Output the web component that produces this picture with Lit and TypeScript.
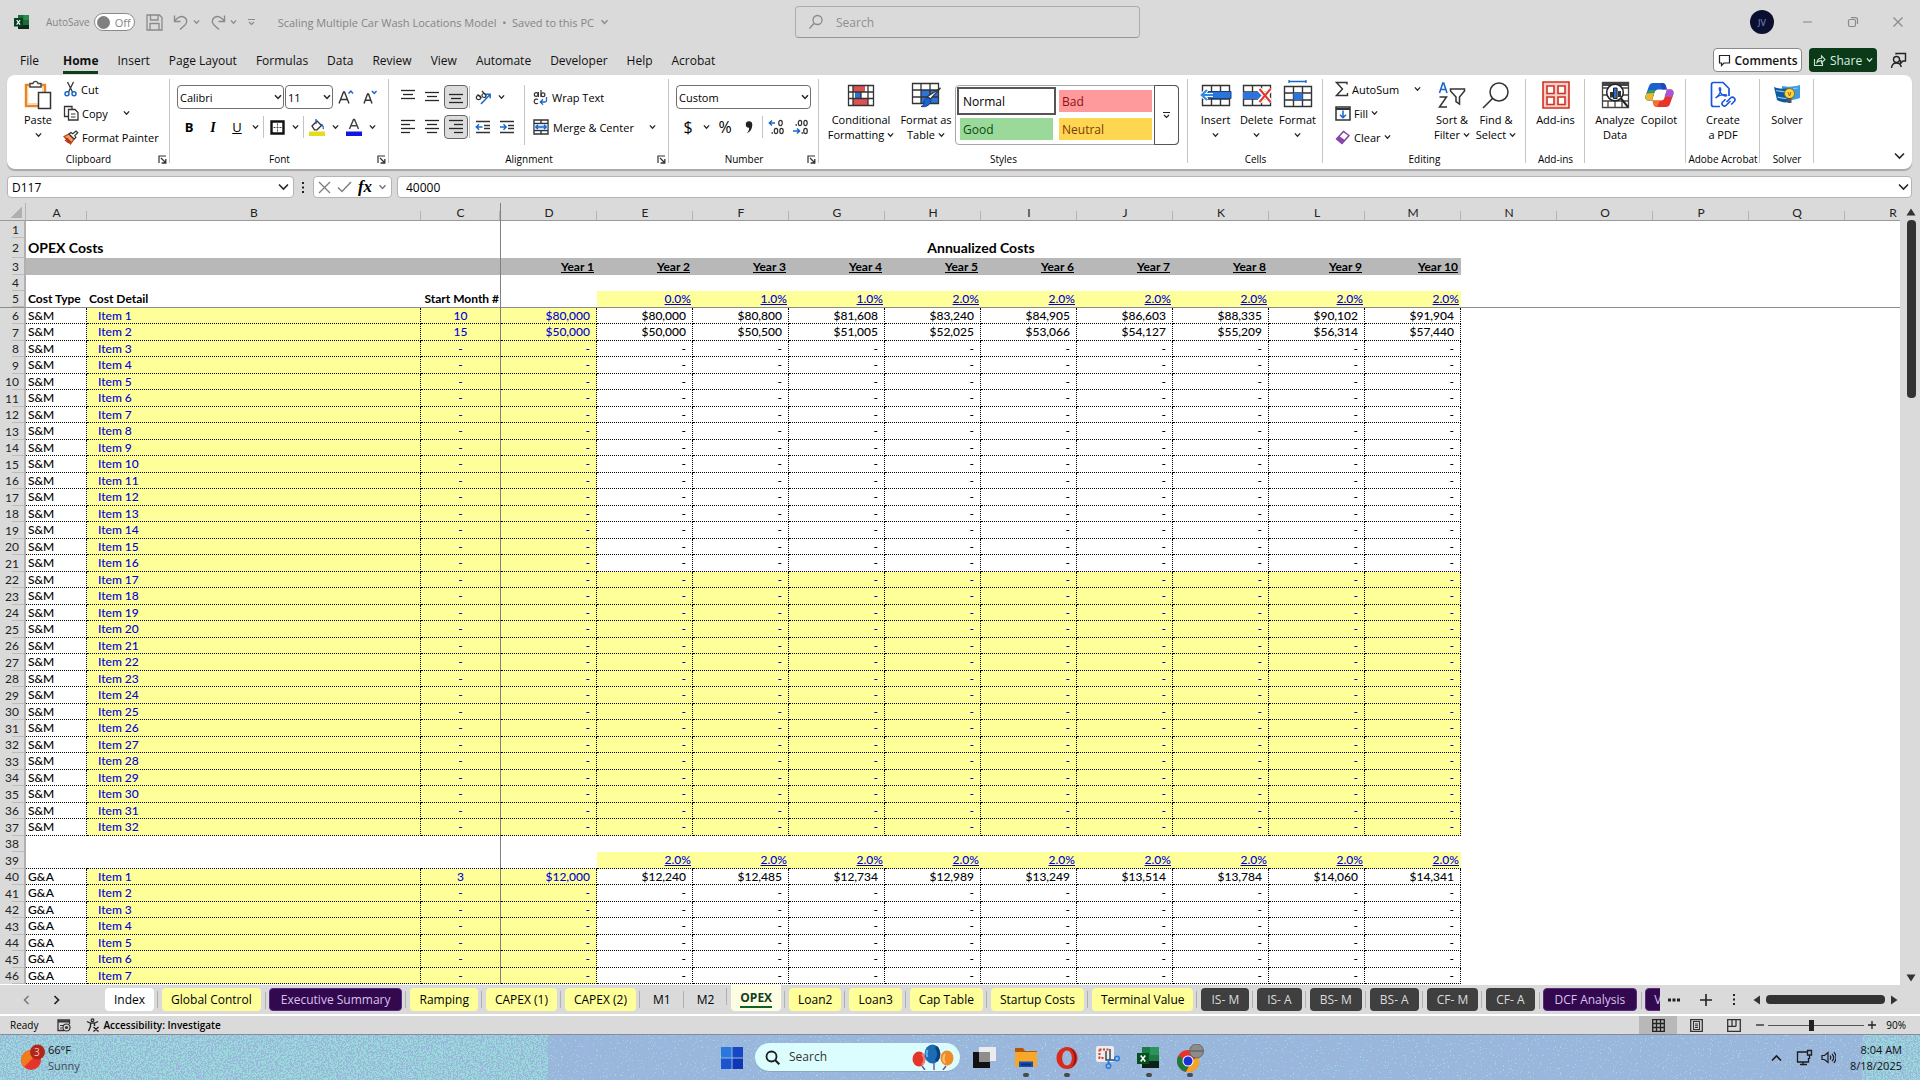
import { LitElement, html, svg, css, nothing } from "lit";
import { customElement, property } from "lit/decorators.js";
import { classMap } from "lit/directives/class-map.js";

/* ---------- icons ---------- */

const icon = (w: number, h: number, body: unknown, box = `0 0 ${w} ${h}`) =>
  html`<svg class="ic" width=${w} height=${h} viewBox=${box} fill="none" aria-hidden="true">${body}</svg>`;

const INK = "#262626";
const BLUE = "#1a66c8";

const chev = (w = 8, color = INK) =>
  icon(w, 6, svg`<path d="M1 1.2 4 4.4 7 1.2" stroke=${color} stroke-width="1.5"/>`, "0 0 8 6");
const chevWide = (color = INK) =>
  icon(11, 8, svg`<path d="M1 1.5 5.5 6 10 1.5" stroke=${color} stroke-width="1.6"/>`);

const bars = (rows: number[][]) =>
  icon(16, 16, svg`${rows.map(([x, y, w]) => svg`<path d="M${x} ${y}.5h${w}" stroke=${INK} stroke-width="1.3"/>`)}`);

const tableGrid = svg`<path d="M1.5 2.5h27v20h-27zM1.5 9h27M1.5 16h27M10.5 2.5v20M19.5 2.5v20" stroke="#333" stroke-width="1.4" fill="#fff"/>`;

const icons = {
  excel: icon(16, 16, svg`<path d="M4 1h11v14H4z" fill="#1d6b3c"/><path d="M9.5 1H15v5H9.5z" fill="#2c8a50"/><path d="M4 11h11v4H4z" fill="#0c2a18"/><path d="M0 4h9v8.5H0z" fill="#06401f"/><path d="m2.7 6 3.4 4.600M6.100 6 2.700 10.600" stroke="#fff" stroke-width="1.2"/>`),
  save: icon(17, 17, svg`<path d="M1 1h12.500L16 3.500V16H1zM4.500 1v5h7.500V1M4 16v-6.500h9V16" stroke="#8a8a8a" stroke-width="1.3"/>`),
  undo: icon(16, 16, svg`<path d="M1.500 1.500v6h6M1.800 7C4 3.500 8 1.300 11.400 3.300c3 1.900 3 5.400.6 7.700L7 15.500" stroke="#8a8a8a" stroke-width="1.4"/>`),
  redo: icon(16, 16, svg`<path d="M14.500 1.500v6h-6M14.200 7C12 3.500 8 1.300 4.600 3.300c-3 1.900-3 5.400-.6 7.700L9 15.500" stroke="#8a8a8a" stroke-width="1.4"/>`),
  custom: icon(9, 8, svg`<path d="M1 1.500h7M2 4l2.500 2.500L7 4" stroke="#8a8a8a" stroke-width="1.2"/>`),
  search: icon(16, 16, svg`<circle cx="9.5" cy="6" r="4.5" stroke="#8a8a8a" stroke-width="1.3"/><path d="M6.200 9.300 1.500 14.500" stroke="#8a8a8a" stroke-width="1.3"/>`),
  minimize: icon(12, 12, svg`<path d="M1 6h9" stroke="#999" stroke-width="1.3"/>`),
  restore: icon(12, 12, svg`<rect x="1.5" y="3.5" width="7" height="7" rx="1.5" stroke="#8a8a8a" stroke-width="1.2"/><path d="M4 1.700h4.500a2 2 0 0 1 2 2V8" stroke="#8a8a8a" stroke-width="1.2"/>`),
  close: icon(12, 12, svg`<path d="m1.500 1.500 9 9m0-9-9 9" stroke="#8a8a8a" stroke-width="1.2"/>`),
  comment: icon(13, 13, svg`<path d="M1.500 1.500h10v7.500H6L3.500 11.500V9h-2z" stroke="#222" stroke-width="1.2"/>`),
  share: icon(13, 13, svg`<path d="M1.500 5v6.500h8V9M4 8.500C4.200 5.800 6 4.300 8.500 4.200V1.800l3.500 3.600-3.500 3.500V6.600C6.800 6.600 5.200 7 4 8.500z" stroke="#cfe6d6" stroke-width="1.1"/>`),
  person: icon(17, 17, svg`<circle cx="6.5" cy="7.5" r="3" stroke="#222" stroke-width="1.4"/><path d="M1.500 16c.3-3 2.300-5 5-5s4.200 1.600 4.800 4M6 2.500V1.500h9.500V9H13l-2.500 2.500V8" stroke="#222" stroke-width="1.4"/>`),
  paste: icon(28, 30, svg`<path d="M2 5h19v21H2z" stroke="#e8832a" stroke-width="2.4" fill="#fff"/><path d="M3.800 6.800h15v17h-15z" stroke="#f6c98d"/><path d="M6 7V3.500h3C9.500.7 13.500.7 14 3.500h3V7z" fill="#fff" stroke="#444" stroke-width="1.4"/><path d="M14.500 12.500h12v16h-12z" fill="#fff" stroke="#333" stroke-width="1.5"/>`),
  cut: icon(15, 16, svg`<path d="M4.500 1 9.500 11M10.500 1 5.500 11" stroke="#333" stroke-width="1.3"/><circle cx="4" cy="12.8" r="2" stroke=${BLUE} stroke-width="1.5"/><circle cx="11" cy="12.8" r="2" stroke=${BLUE} stroke-width="1.5"/>`),
  copy: icon(16, 16, svg`<path d="M9 4V1.500H1.500v10H5" stroke="#333" stroke-width="1.3"/><path d="M5.500 4.500H12l3 3v7.500H5.500z" stroke="#333" stroke-width="1.3"/><path d="M8 9h4.500M8 12h4.500" stroke="#333"/>`),
  painter: icon(16, 15, svg`<path d="M1 6.500 6 4l5 5-3.500 5z" fill="#f0a05a" stroke="#c2410c" stroke-width="1.3"/><path d="M3.500 8 8 12.500M2 10l4 3" stroke="#b3261e" stroke-width="1.4"/><path d="m6 4 2-1.500 1.800 1.200L13 1l1.800 1.800-3 2.800 1 2L11 9z" fill="#fff" stroke="#333" stroke-width="1.2"/>`),
  launcher: icon(9, 9, svg`<path d="M1 8V1h7" stroke="#333" stroke-width="1.2"/><path d="m3 3 4.500 4.500M7.800 4v4H3.600" stroke="#333" stroke-width="1.3"/>`),
  fontUp: icon(16, 16, svg`<path d="M1 14.500 5.500 3h1L11 14.500M2.700 10.500h6.600" stroke="#333" stroke-width="1.4"/><path d="m10.500 4.500 2.300-2.500L15 4.500" stroke=${BLUE} stroke-width="1.5"/>`),
  fontDown: icon(16, 16, svg`<path d="M2 14.500 5.500 5h1L10 14.500M3.300 11.300h5.400" stroke="#333" stroke-width="1.4"/><path d="m10 2 2.300 2.500L14.500 2" stroke=${BLUE} stroke-width="1.5"/>`),
  border: icon(15, 15, svg`<path d="M1.500 1.500h12v12h-12z" stroke="#111" stroke-width="2.4"/><path d="M7.500 3.500v8M3.500 7.500h8" stroke="#444" stroke-dasharray="2 1"/>`),
  fill: icon(16, 18, svg`<path d="m3 8 5-5 4.500 4.500-4.500 4.300H5.500z" stroke="#333" stroke-width="1.3"/><path d="M7 1v5M12.500 6c1.500 1.500 2 3 1.800 5" stroke=${BLUE} stroke-width="1.4"/><path d="M0 13.500h16V18H0z" fill="#e6dc1e"/>`),
  fontColor: icon(16, 18, svg`<path d="M3.500 11 7.500 1.500h1L12.500 11M5 7.800h6" stroke="#444" stroke-width="1.5"/><path d="M0 13.500h16V18H0z" fill="#1414e6"/>`),
  orient: icon(17, 16, svg`<circle cx="3.5" cy="8.5" r="2.2" stroke="#333" stroke-width="1.2"/><path d="M2.500 5.500 6.500 9M7 2l4 4.500" stroke="#333" stroke-width="1.2"/><circle cx="9" cy="6.5" r="2" stroke="#333" stroke-width="1.2"/><path d="M6 15 15 5.500M11 5.300h4.200v4" stroke=${BLUE} stroke-width="1.5"/>`),
  outdent: icon(16, 16, svg`<path d="M1 2.500h14M9 6.500h6M9 9.500h6M1 13.500h14" stroke="#333" stroke-width="1.3"/><path d="M7.500 8H1.500M4 5.300 1.300 8 4 10.700" stroke=${BLUE} stroke-width="1.4"/>`),
  indent: icon(16, 16, svg`<path d="M1 2.500h14M9 6.500h6M9 9.500h6M1 13.500h14" stroke="#333" stroke-width="1.3"/><path d="M1 8h6M4.500 5.300 7.200 8 4.500 10.700" stroke=${BLUE} stroke-width="1.4"/>`),
  wrap: icon(15, 16, svg`<circle cx="3.2" cy="5.5" r="1.9" stroke="#333" stroke-width="1.2"/><path d="M5.400 3v5M8 1v7M5 10.500c-2-1-3.800 0-3.800 1.900s1.800 2.900 3.800 1.900" stroke="#333" stroke-width="1.2"/><circle cx="10" cy="5.8" r="1.9" stroke="#333" stroke-width="1.2"/><path d="M13.500 8v3.500c0 1-.5 1.500-1.500 1.500H7.500m2.500-2.700L7.300 13l2.700 2.600" stroke=${BLUE} stroke-width="1.3"/>`),
  merge: icon(16, 16, svg`<path d="M1 1h14v14H1zM1 4.500h14M1 11.500h14M8 1v3.500M8 11.500V15" stroke="#333" stroke-width="1.4"/><path d="M1.700 5h12.600v6H1.700z" fill="#cfe0f7"/><path d="M3 8h10M5 5.800 2.800 8 5 10.200M11 5.800 13.200 8 11 10.200" stroke=${BLUE} stroke-width="1.4"/>`),
  comma: icon(8, 13, svg`<circle cx="4" cy="3.5" r="3.2" fill="#222"/><path d="M7.200 3.500C7.400 8 5 11 1.500 12.500 3.500 10.500 4.500 8.500 4 6z" fill="#222"/>`),
  incDec: icon(17, 16, svg`<path d="M7 4H1.500M4 1.500 1.300 4 4 6.500" stroke=${BLUE} stroke-width="1.4"/><ellipse cx="12.5" cy="4" rx="1.8" ry="2.7" stroke="#333" stroke-width="1.2"/><ellipse cx="8" cy="12" rx="1.7" ry="2.7" stroke="#333" stroke-width="1.2"/><ellipse cx="13.5" cy="12" rx="1.7" ry="2.7" stroke="#333" stroke-width="1.2"/><path d="M3.500 14h1.500" stroke="#333" stroke-width="1.5"/>`),
  decDec: icon(17, 16, svg`<ellipse cx="8" cy="4" rx="1.7" ry="2.7" stroke="#333" stroke-width="1.2"/><ellipse cx="13.5" cy="4" rx="1.7" ry="2.7" stroke="#333" stroke-width="1.2"/><path d="M3.500 6h1.500" stroke="#333" stroke-width="1.5"/><path d="M1 12h6.500M5 9.500 7.700 12 5 14.500" stroke=${BLUE} stroke-width="1.4"/><ellipse cx="13.5" cy="12" rx="1.8" ry="2.7" stroke="#333" stroke-width="1.2"/><path d="M9.500 14H11" stroke="#333" stroke-width="1.5"/>`),
  condFormat: icon(30, 26, svg`<path d="M2.500 3.500h25v20h-25z" fill="#fff"/><path d="M7 3.500h12v6.500H7zM7 16.500h15v7H7z" fill="#e05252"/><path d="M9 10h6v6.500H9z" fill="#2b6fd0"/><path d="M2.500 3.500h25v20h-25zM2.500 10h25M2.500 16.500h25M7 3.500v20M22 3.500v20M15 10v6.500" stroke="#333" stroke-width="1.3"/>`),
  fmtTable: icon(31, 28, svg`<path d="M10 9h18v13H10z" fill="#2b74de"/><path d="M1.500 2.500h26v20h-26zM1.500 9h26M1.500 16h26M10 2.500v20M19 2.500v20" stroke="#333" stroke-width="1.3"/><path d="m29.500 7-10 11-3-2.500z" fill="#fff" stroke="#333" stroke-width="1.2"/><path d="M17 17c2.500.5 3.500 2.500 2.500 4.500-1.500 3-5 5-9.500 4 2.500-1 3-2.500 3-4.500s2-4.300 4-4z" fill="#1c63cc" stroke="#123f86"/>`),
  insert: icon(32, 26, svg`<g transform="translate(1 1)">${tableGrid}</g><path d="M8 9.500h23v7H8z" fill="#2b74de" stroke="#1b3f78"/><path d="M13 13H2m5-5-5.300 5L7 18" stroke="#fff" stroke-width="4"/><path d="M13 13H2m5-5-5.300 5L7 18" stroke="#2b8be0" stroke-width="2"/>`),
  del: icon(32, 26, svg`<g transform="translate(1 1)">${tableGrid}</g><path d="M2 10h16l3 3.500-3 3.500H2z" fill="#2b74de"/><path d="m18 7 12 13m0-13L18 20" stroke="#fff" stroke-width="5"/><path d="m18.500 7 11 13m0-13-11 13" stroke="#e5352b" stroke-width="2"/>`),
  format: icon(32, 30, svg`<path d="M7 1.500h17M7 0v3M24 0v3" stroke=${BLUE} stroke-width="1.3"/><g transform="translate(1 4)">${tableGrid}<path d="M10.500 9h9v7h-9z" fill="#2b74de"/></g>`),
  sum: icon(14, 16, svg`<path d="M12 3.500V1.500H1.500L7.500 8l-6 6.500H12.500V12" stroke="#333" stroke-width="1.4"/>`),
  fillDown: icon(16, 15, svg`<path d="M1 1h14v13H1z" stroke="#333" stroke-width="1.5"/><path d="M1 3h14" stroke="#333" stroke-width="2"/><path d="M8 4.500v7M5 8.800l3 3 3-3" stroke=${BLUE} stroke-width="1.5"/>`),
  eraser: icon(16, 15, svg`<path d="m1.500 9 7-7.500 5.500 4-7 8z" stroke="#7a3fa0" stroke-width="1.4" fill="#fff"/><path d="m1.500 9 2.700-3 5.600 4-2.800 3.500z" fill="#8e44ad"/>`),
  sort: icon(28, 28, svg`<path d="m1.500 12 3.300-10h.9L9 12M2.700 8.500h5.200" stroke=${BLUE} stroke-width="1.6"/><path d="M1.500 16h7l-7 10h7.500" stroke="#333" stroke-width="1.5"/><path d="M12.500 8h14v2l-5 6v7l-3.500-2.500V16l-5.500-6z" stroke="#333" stroke-width="1.5"/>`),
  find: icon(28, 28, svg`<circle cx="17" cy="11" r="9" stroke="#333" stroke-width="1.5"/><path d="M10.500 17.500 1 27" stroke="#333" stroke-width="1.6"/>`),
  addins: icon(28, 28, svg`<path d="M1 1h26v26H1z" fill="#f8d0cb" stroke="#d3301f" stroke-width="1.6"/><path d="M5 5h7v7.500H5zM16 5h7v7.500h-7zM5 16h7v7.500H5zM16 16h7v7.500h-7z" fill="#fff" stroke="#d3301f" stroke-width="1.6"/>`),
  analyze: icon(29, 28, svg`<path d="M1.500 1.500h26v25h-26zM1.500 7h26M1.500 14h26M1.500 20h26M7 20v6M14 20v6M21 20v6" stroke="#444" stroke-width="1.3"/><path d="M1 1h27v4H1z" fill="#444"/><circle cx="14" cy="11.5" r="8.3" fill="#fff" stroke="#222" stroke-width="1.5"/><path d="M9 11h3v5.500H9zM17 10h3v6h-3z" fill="#333"/><path d="M12.500 7h3.600v10.500h-3.600z" fill="#2b6fd0" stroke="#222"/><path d="m20 17.500 7 8.500" stroke="#222" stroke-width="2"/>`),
  copilot: icon(29, 28, svg`<path d="M8 2h9c2 0 3 1 3.600 3l1 3.500H13c-2 0-3 1-3.600 3L7 19.500H4c-3 0-4-2-3.300-5L4 5c.7-2 2-3 4-3z" fill="#1d5fd0"/><path d="M4 9h8.500c-1.700.4-2.600 1-3.100 2.500L7 19.500H4c-3 0-4-2-3.300-5z" fill="#2f9a63"/><path d="M1.500 12.500 9 12l-2 7.500H4c-2.600 0-3.900-2-3.300-5z" fill="#f0b429"/><path d="M21 26h-9c-2 0-3-1-3.600-3l-1-3.500H16c2 0 3-1 3.600-3L22 8.500h3c3 0 4 2 3.300 5L25 23c-.7 2-2 3-4 3z" fill="#e5352b"/><path d="M22 8.500h3c3 0 4 2 3.300 5l-.8 2.500-8-.5z" fill="#a855d8"/><path d="M15.500 2h2c2 0 3 1 3.500 3l1 3.500h-5z" fill="#2447b8"/><path d="M7.500 19.500H15l-3 6.500c-2 0-3-1-3.600-3z" fill="#f3722c"/>`),
  pdf: icon(26, 28, svg`<path d="M10 25.500H3.500c-1.300 0-2-.7-2-2v-20c0-1.300.7-2 2-2H13l6 6V15" stroke="#1656e0" stroke-width="1.7"/><path d="M5.500 17c4-2.500 6-7.500 5-10-1-1-1.600.3-1 2 1 3.500 3.700 6 6.500 6 1 0 1-1.300-.5-1.400-3-.3-7 .9-10 3.400z" stroke="#1656e0" stroke-width="1.3"/><path d="m16.500 21 4-4a2.500 2.500 0 0 1 3.700 3.500l-3 3M20.500 20l-4.300 4.300a2.300 2.300 0 0 1-3.500-3.300l2.800-2.800" stroke="#1656e0" stroke-width="1.6"/>`),
  solver: icon(28, 22, svg`<path d="M9 2c6 1 12 1 18-1v13c-6 2-12 3-18 2z" fill="#3d9be0"/><path d="M1 3c5 2 10 2 15 1v14c-5 1-9 0-12-2z" fill="#0f5a9e"/><path d="M3 6.500c4 1 7 1.500 10 1.200M4.500 13c3 1 6 1.500 9 1.500M20 5l5-1" stroke="#8cc7ee" stroke-width="1.2"/><circle cx="16.500" cy="9.500" r="5" fill="#ffd23f" stroke="#8a6a10"/><path d="M14.500 14h4v5h-4z" fill="#555"/><path d="m15 8 1.500 4L18 8" stroke="#8a6a10"/>`),
  cancel: icon(13, 13, svg`<path d="m1 1 11 11M12 1 1 12" stroke="#7c7c7c" stroke-width="1.3"/>`),
  check: icon(15, 12, svg`<path d="m1 6.500 4 4L14 1" stroke="#7c7c7c" stroke-width="1.4"/>`),
  vdots: icon(4, 13, svg`<path d="M1 1h2v2H1zM1 5.500h2v2H1zM1 10h2v2H1z" fill="#222"/>`),
  hdots: icon(12, 4, svg`<path d="M0 .5h3v3H0zM4.500.5h3v3h-3zM9 .5h3v3H9z" fill="#222"/>`),
  plus: icon(12, 12, svg`<path d="M6 0v12M0 6h12" stroke="#222" stroke-width="1.6"/>`),
  navL: icon(7, 10, svg`<path d="M5.500 1 1.500 5l4 4" stroke="#777" stroke-width="1.5"/>`),
  navR: icon(7, 10, svg`<path d="m1.500 1 4 4-4 4" stroke="#222" stroke-width="1.7"/>`),
  triUp: icon(10, 8, svg`<path d="M5 .5 9.500 7.500h-9z" fill="#333"/>`),
  triDown: icon(10, 8, svg`<path d="M5 7.500 9.500.5h-9z" fill="#333"/>`),
  triL: icon(8, 10, svg`<path d="M.5 5 7 .5v9z" fill="#333"/>`),
  triR: icon(8, 10, svg`<path d="M7.500 5 1 .5v9z" fill="#333"/>`),
  macro: icon(14, 13, svg`<path d="M7 11.500H1V1h11.500v4" stroke="#333" stroke-width="1.3"/><path d="M1 1.500h11.500v2H1z" fill="#333"/><path d="M3 6.500h3M3 9h2" stroke="#333"/><circle cx="9.5" cy="8.5" r="3.5" stroke="#333" stroke-width="1.2"/><circle cx="9.5" cy="8.5" r="1.6" fill="#333"/>`),
  access: icon(14, 14, svg`<circle cx="6.5" cy="2.3" r="1.4" stroke="#222" stroke-width="1.2"/><path d="M1 3.500c3 2.200 8 2.200 11 0M4.500 5.500v3L2.500 13M8.500 5.500v2.500M7.500 9l5 4.500m0-4.500-5 4.500" stroke="#222" stroke-width="1.4"/>`),
  viewNormal: icon(13, 13, svg`<path d="M.7.7h11.600v11.600H.7zM.7 4.500h11.600M.7 8.500h11.600M4.500.7v11.600M8.500.7v11.600" stroke="#222" stroke-width="1.3"/>`),
  viewPage: icon(13, 13, svg`<path d="M.7.7h11.600v11.600H.7z" stroke="#333" stroke-width="1.3"/><path d="M3.500 2.500h6v8h-6zM5 5h3M5 6.800h3M5 8.500h3" stroke="#333" stroke-width="1.1"/>`),
  viewBreak: icon(14, 13, svg`<path d="M.7.7h12.600v11.600H.7zM5 .7v6.500M9 .7v6.500M.7 7.300h8.500" stroke="#333" stroke-width="1.3"/>`),
  start: icon(22, 22, svg`<path d="M0 0h10.500v10.500H0z" fill="#2a78dc"/><path d="M11.500 0H22v10.500H11.500z" fill="#1648c4"/><path d="M0 11.500h10.500V22H0z" fill="#1b54cf"/><path d="M11.500 11.500H22V22H11.500z" fill="#0f36b4"/>`),
  glass: icon(15, 15, svg`<circle cx="6.5" cy="6.5" r="5" stroke="#1c1c1c" stroke-width="1.8"/><path d="m10.300 10.300 4 4" stroke="#1c1c1c" stroke-width="2"/>`),
  balloons: icon(42, 26, svg`<path d="M22 18v8M10 22l3 4M34 22l-3 4" stroke="#6b3fa0" stroke-width="1.3"/><ellipse cx="7" cy="15" rx="6.5" ry="7.5" fill="#e5352b"/><path d="M10 10c3 3 3 8 0 11" stroke="#f0806f" stroke-width="2"/><ellipse cx="35" cy="14" rx="6.5" ry="7.5" fill="#f08a24"/><path d="M33 10c-2 3-2 6 0 9" stroke="#ffc56b" stroke-width="2"/><ellipse cx="20.5" cy="10" rx="8" ry="9.5" fill="#1d6bb5"/><path d="M24 3c3 3 4 10 0 14" stroke="#0e3f78" stroke-width="3"/><path d="M15.500 6c-1 2-1 5 0 7" stroke="#69b2e8" stroke-width="2"/>`),
  taskview: icon(23, 21, svg`<path d="M6 0h17v14H6z" fill="#ececec"/><path d="M0 5h17v16H0z" fill="#111"/><path d="M6 5h11v10H6z" fill="#8e8e8e"/>`),
  folder: icon(24, 22, svg`<path d="M1 1h8l2 3h12v5H1z" fill="#b5560f"/><path d="M1 5h22v15H1z" fill="#f7a72a"/><path d="M5 14.500h14V20H5z" fill="#1450b8"/><path d="M7 17.500h10" stroke="#0b2f78" stroke-width="2"/>`),
  opera: icon(22, 22, svg`<path fill-rule="evenodd" d="M11 0C5 0 .5 5 .5 11S5 22 11 22s10.500-5 10.500-11S17 0 11 0zm0 3.500c2.800 0 4.800 3.500 4.800 7.500s-2 7.500-4.800 7.500S6.200 15 6.200 11 8.200 3.500 11 3.500z" fill="#d92a1c"/><path d="M14 1c8 3 9 16 0 20.500 6-5 6-15 0-20.500z" fill="#8e1512"/>`),
  snip: icon(24, 23, svg`<rect x="0" y="0" width="18" height="16" rx="2" fill="#ededed"/><path d="M3.500 3.500h9.500M3.500 3.500v8.500h5" stroke="#d0392b" stroke-width="2" stroke-dasharray="2 1.5"/><path d="M10 5v9h9M14 3v11" stroke="#444" stroke-width="1.500"/><path d="m12 13 1 5M16 14h4" stroke="#2b78d8" stroke-width="2"/><circle cx="12.500" cy="20" r="2.300" stroke="#2b78d8" stroke-width="1.500"/><circle cx="21" cy="12.500" r="2.300" stroke="#2b78d8" stroke-width="1.500"/>`),
  excelBig: icon(23, 22, svg`<path d="M5 0h17v21H5z" fill="#1d7a45"/><path d="M13 0h9v8h-9z" fill="#2c9459"/><path d="M5 14h17v7H5z" fill="#0b2415"/><path d="M0 6h12v11H0z" fill="#06501f"/><path d="m3.700 8.500 4.600 6M8.300 8.500l-4.600 6" stroke="#fff" stroke-width="1.5"/>`),
  chrome: icon(28, 28, svg`<circle cx="12" cy="17" r="11" fill="#e5352b"/><path d="M2.500 11.500a11 11 0 0 0 7 16.200L14 20z" fill="#1f7a3a"/><path d="M22 12a11 11 0 0 1-12 15.800L16 17z" fill="#f5a524"/><circle cx="12" cy="17" r="5.5" fill="#fff"/><circle cx="12" cy="17" r="4.5" fill="#1632d8"/><circle cx="20.5" cy="7" r="7" fill="#8c8c8c" stroke="#666"/><path d="M14 7h13" stroke="#555"/>`),
  weather: icon(26, 27, svg`<circle cx="11" cy="16" r="10" fill="#e5352b"/><path d="M11 6a10 10 0 0 0-7 17l9-9z" fill="#f07a1e"/><circle cx="17.5" cy="8" r="7.5" fill="#b3241a"/>`),
  trayUp: icon(11, 8, svg`<path d="M1 6.500 5.500 2 10 6.500" stroke="#1c1c1c" stroke-width="1.6"/>`),
  tray: icon(17, 17, svg`<path d="M11 3H1.500v10h11V9M7 13v2.500M4 15.500h7" stroke="#1c1c1c" stroke-width="1.3"/><path d="M11.500 1.500h4V6h-4zM13.500 6v4" stroke="#1c1c1c" stroke-width="1.3"/>`),
  speaker: icon(15, 13, svg`<path d="M1 4.500h2.500L7 1.500v10L3.500 8.500H1z" stroke="#1c1c1c" stroke-width="1.2"/><path d="M9 4.500c1 1.200 1 2.800 0 4M11 2.800c2 2.200 2 5.200 0 7.400M13 1c2.500 3.300 2.500 7.700 0 11" stroke="#1c1c1c" stroke-width="1.2"/>`),
};

/* ---------- data ---------- */

const YEARS = ["Year 1", "Year 2", "Year 3", "Year 4", "Year 5", "Year 6", "Year 7", "Year 8", "Year 9", "Year 10"];
const COLUMNS = "ABCDEFGHIJKLMNOPQR".split("");
const SM_GROWTH = ["0.0%", "1.0%", "1.0%", "2.0%", "2.0%", "2.0%", "2.0%", "2.0%", "2.0%"];
const GA_GROWTH = Array(9).fill("2.0%");

interface Cost {
  month: string;
  values: string[];
}
const EMPTY: Cost = { month: "-", values: Array(10).fill("-") };
const SM: Record<number, Cost> = {
  1: { month: "10", values: ["$80,000", "$80,000", "$80,800", "$81,608", "$83,240", "$84,905", "$86,603", "$88,335", "$90,102", "$91,904"] },
  2: { month: "15", values: ["$50,000", "$50,000", "$50,500", "$51,005", "$52,025", "$53,066", "$54,127", "$55,209", "$56,314", "$57,440"] },
};
const GA: Record<number, Cost> = {
  1: { month: "3", values: ["$12,000", "$12,240", "$12,485", "$12,734", "$12,989", "$13,249", "$13,514", "$13,784", "$14,060", "$14,341"] },
};
const range = (n: number) => Array.from({ length: n }, (_, i) => i + 1);

const TABS: [string, string][] = [
  ["Index", "white"], ["Global Control", "yellow"], ["Executive Summary", "purple"], ["Ramping", "yellow"],
  ["CAPEX (1)", "yellow"], ["CAPEX (2)", "yellow"], ["M1", "plain"], ["M2", "plain"], ["OPEX", "active"],
  ["Loan2", "yellow"], ["Loan3", "yellow"], ["Cap Table", "yellow"], ["Startup Costs", "yellow"],
  ["Terminal Value", "yellow"], ["IS- M", "dark"], ["IS- A", "dark"], ["BS- M", "dark"], ["BS- A", "dark"],
  ["CF- M", "dark"], ["CF- A", "dark"], ["DCF Analysis", "purple"], ["V", "purple"],
];

/* ---------- shared styles ---------- */

const base = css`
  * { box-sizing: border-box; }
  button, input, select {
    font: inherit;
    color: inherit;
    margin: 0;
    padding: 0;
    border: 0;
    background: none;
    border-radius: 0;
    appearance: none;
    outline: none;
  }
  button {
    display: inline-flex;
    align-items: center;
    justify-content: center;
    white-space: nowrap;
    flex: none;
  }
  a { color: inherit; text-decoration: none; }
  .ic { display: block; flex: none; }
`;

/* ---------- title bar and tabs ---------- */

@customElement("title-bar")
export class TitleBar extends LitElement {
  static styles = [base, css`
    :host { display: block; }
    .bar { display: grid; grid-template-columns: 53fr 345px 52fr; align-items: center; height: 44px; color: #858585; font-size: 11px; }
    .left { display: flex; align-items: center; padding-left: 14px; }
    .auto { margin: 0 4px 0 16px; font-size: 10px; }
    .toggle { display: flex; align-items: center; gap: 5px; width: 41px; height: 18px; border: 1px solid #8a8a8a; border-radius: 9px; background: #fff; padding-left: 2px; margin-right: 11px; justify-content: flex-start; }
    .knob { width: 13px; height: 13px; border-radius: 50%; background: #808080; }
    .tool { margin-right: 4px; }
    .tool.wide { margin-right: 10px; }
    .name { margin-left: 22px; gap: 6px; }
    .search { display: flex; align-items: center; gap: 12px; height: 32px; border: 1px solid #adadad; border-bottom-color: #969696; border-radius: 4px; padding-left: 12px; }
    .search input { flex: 1; min-width: 0; font-size: 12px; }
    .search input::placeholder { color: #8f8f8f; opacity: 1; }
    .right { display: flex; align-items: center; justify-content: flex-end; }
    .avatar { width: 24px; height: 24px; border-radius: 50%; background: #0b1030; color: #7d8fd0; font-size: 9px; margin-right: 11px; }
    .win { width: 45px; height: 24px; }
    .tabs { display: flex; align-items: flex-start; height: 31px; padding-left: 20px; font-size: 12px; color: #111; }
    .menu { display: flex; gap: 19px; flex: 1; padding-top: 8px; line-height: 18px; font-weight: 500; }
    .menu a:first-child { margin-right: 5px; }
    .menu a.on { font-weight: 700; border-bottom: 3px solid #0d3d1b; height: 22px; }
    .actions { display: flex; align-items: center; gap: 7px; padding: 4px 13px 0 0; }
    .btn { height: 24px; border-radius: 4px; gap: 4px; font-weight: 600; }
    .comments { width: 89px; background: #fff; border: 1px solid #8a8a8a; }
    .share { width: 68px; background: #0a3a17; color: #dcefe0; font-weight: 400; }
    .present { margin-left: 6px; }
  `];

  render() {
    const menu = ["File", "Home", "Insert", "Page Layout", "Formulas", "Data", "Review", "View", "Automate", "Developer", "Help", "Acrobat"];
    return html`
      <header class="bar">
        <div class="left">
          ${icons.excel}
          <span class="auto" id="auto">AutoSave</span>
          <button class="toggle" role="switch" aria-checked="false" aria-labelledby="auto"><span class="knob"></span>Off</button>
          <button class="tool wide" aria-label="Save">${icons.save}</button>
          <button class="tool" aria-label="Undo">${icons.undo}</button>
          <button class="tool wide" aria-label="Undo list">${chev(7, "#8a8a8a")}</button>
          <button class="tool" aria-label="Redo">${icons.redo}</button>
          <button class="tool wide" aria-label="Redo list">${chev(7, "#8a8a8a")}</button>
          <button aria-label="Customize toolbar">${icons.custom}</button>
          <button class="name">Scaling Multiple Car Wash Locations Model&nbsp; •&nbsp; Saved to this PC ${chev(9, "#8a8a8a")}</button>
        </div>
        <label class="search">${icons.search}<input type="text" placeholder="Search" aria-label="Search" /></label>
        <div class="right">
          <button class="avatar" aria-label="Account">JV</button>
          <button class="win" aria-label="Minimize">${icons.minimize}</button>
          <button class="win" aria-label="Restore">${icons.restore}</button>
          <button class="win" aria-label="Close">${icons.close}</button>
        </div>
      </header>
      <div class="tabs">
        <nav class="menu">${menu.map((m) => html`<a href="#" class=${classMap({ on: m === "Home" })}>${m}</a>`)}</nav>
        <div class="actions">
          <button class="btn comments">${icons.comment}Comments</button>
          <button class="btn share">${icons.share}Share ${chev(7, "#cfe6d6")}</button>
          <button class="present" aria-label="Present">${icons.person}</button>
        </div>
      </div>
    `;
  }
}

/* ---------- ribbon ---------- */

@customElement("ribbon-bar")
export class RibbonBar extends LitElement {
  static styles = [base, css`
    :host { display: block; padding: 0 8px 0 7px; }
    .ribbon { display: flex; height: 94px; background: #fff; border-radius: 8px; box-shadow: 0 2px 1px #a8a8a8; font-size: 11px; line-height: 15px; color: #000; font-weight: 500; }
    .group { display: grid; grid-template-rows: 1fr 17px; position: relative; padding: 2px 0 1px; flex: none; }
    .group::after { content: ""; position: absolute; right: 0; top: 4px; bottom: 6px; width: 1px; background: #c4c4c4; }
    .group:last-child::after { display: none; }
    .body { display: flex; min-width: 0; }
    .foot { display: flex; align-items: center; justify-content: center; font-size: 10px; position: relative; white-space: nowrap; }
    .foot button { position: absolute; right: 3px; bottom: 4px; }
    .clipboard { width: 163px; }
    .font { width: 219px; }
    .align { width: 280px; }
    .number { width: 150px; }
    .styles { width: 369px; }
    .styles .body { padding-left: 3px; }
    .cells { width: 135px; }
    .cells .body { padding-left: 7px; }
    .editing { width: 203px; }
    .editing .stack { width: 95px; }
    .addins { width: 59px; }
    .analyze { width: 101px; }
    .analyze .body { padding-left: 8px; }
    .acrobat { width: 74px; }
    .solver { width: 54px; }
    .rest { flex: 1; }
    .rest .foot button { right: 7px; bottom: 8px; }
    .stack { display: flex; flex-direction: column; }
    .stack button { height: 24px; gap: 3px; justify-content: flex-start; }
    .push { margin-left: 12px; }
    .big { flex-direction: column; justify-content: flex-start; text-align: center; gap: 0; }
    .big .pic { height: 35px; display: flex; align-items: center; justify-content: center; }
    .big .cap { display: flex; align-items: center; gap: 3px; justify-content: center; height: 15px; }
    .w41 { width: 41px; }
    .w44 { width: 44px; }
    .w52 { width: 52px; }
    .w54 { width: 54px; }
    .w59 { width: 59px; }
    .w74 { width: 74px; }
    .w78 { width: 78px; }
    .pasteBtn { width: 50px; margin-left: 6px; }
    .rows { display: flex; flex-direction: column; gap: 6px; padding: 8px 0 0 7px; }
    .row { display: flex; align-items: center; height: 24px; }
    .t { width: 24px; height: 24px; }
    .d { width: 13px; height: 24px; }
    .on { background: #dcdcdc; border: 1px solid #666; border-radius: 4px; }
    .rule { width: 1px; height: 22px; background: #c4c4c4; margin: 0 1px; }
    .tall { width: 1px; height: 60px; background: #c4c4c4; margin: 8px 0 0 5px; }
    .glyph { font-size: 13px; font-weight: 700; }
    .serif { font-family: "Liberation Serif", serif; font-style: italic; font-weight: 700; font-size: 14px; }
    .under { text-decoration: underline; font-weight: 400; }
    .pick { position: relative; display: block; margin-right: 1px; }
    .pick select { width: 100%; height: 24px; border: 1px solid #707070; border-radius: 4px; padding-left: 2px; background: #fff; font-size: 11px; }
    .pick .ic { position: absolute; right: 2px; top: 9px; }
    .face { width: 107px; }
    .size { width: 48px; }
    .numfmt { width: 135px; }
    .labels { padding-left: 8px; }
    .labels button { height: 24px; gap: 4px; }
    .money { font-size: 16px; }
    .gallery { display: grid; grid-template-columns: 1fr 23px; width: 224px; height: 60px; margin: 8px 0 0 3px; border: 1px solid #a6a6a6; border-radius: 4px; }
    .swatches { display: grid; grid-template-columns: 93px 93px; grid-template-rows: 22px 22px; gap: 6px 6px; padding: 4px 0 0 4px; font-size: 12px; }
    .swatches button { justify-content: flex-start; padding-left: 3px; }
    .normal { outline: 2px solid #555; outline-offset: 1px; }
    .bad { background: #ff9a9c; color: #8e1010; }
    .good { background: #9ad99a; color: #084d10; }
    .neutral { background: #ffd651; color: #7a3a06; }
    .more { border: 1px solid #555; border-radius: 0 4px 4px 0; margin: -1px; }
  `];

  private big(cls: string, pic: unknown, line1: string, line2: unknown = nothing) {
    return html`<button class="big ${cls}"><span class="pic">${pic}</span><span class="cap">${line1}</span><span class="cap">${line2}</span></button>`;
  }

  private foot(label: string, launcher = false) {
    return html`<div class="foot">${label}${launcher ? html`<button aria-label="${label} settings">${icons.launcher}</button>` : nothing}</div>`;
  }

  private pick(cls: string, label: string, value: string) {
    return html`<label class="pick ${cls}"><select aria-label=${label}><option>${value}</option></select>${chev(8)}</label>`;
  }

  render() {
    const t = (label: string, body: unknown, cls = "") => html`<button class="t ${cls}" aria-label=${label}>${body}</button>`;
    const d = (label: string) => html`<button class="d" aria-label=${label}>${chev(7)}</button>`;
    const rule = html`<span class="rule"></span>`;
    return html`
      <section class="ribbon">
        <div class="group clipboard">
          <div class="body">
            ${this.big("pasteBtn", icons.paste, "Paste", chev(7))}
            <div class="stack">
              <button>${icons.cut}Cut</button>
              <button>${icons.copy}Copy <span class="push">${chev(7)}</span></button>
              <button>${icons.painter}Format Painter</button>
            </div>
          </div>
          ${this.foot("Clipboard", true)}
        </div>

        <div class="group font">
          <div class="rows">
            <div class="row">${this.pick("face", "Font", "Calibri")}${this.pick("size", "Font size", "11")}${t("Increase font", icons.fontUp)}${t("Decrease font", icons.fontDown)}</div>
            <div class="row">
              ${t("Bold", "B", "glyph")}${t("Italic", "I", "serif")}${t("Underline", "U", "glyph under")}${d("Underline styles")}${rule}
              ${t("Borders", icons.border)}${d("Border styles")}${rule}${t("Fill colour", icons.fill)}${d("Fill colours")}${t("Font colour", icons.fontColor)}${d("Font colours")}
            </div>
          </div>
          ${this.foot("Font", true)}
        </div>

        <div class="group align">
          <div class="body">
            <div class="rows">
              <div class="row">
                ${t("Top align", bars([[1, 1, 14], [3, 5, 10], [1, 9, 14]]))}
                ${t("Middle align", bars([[1, 3, 14], [3, 7, 10], [1, 11, 14]]))}
                ${t("Bottom align", bars([[1, 5, 14], [3, 9, 10], [1, 13, 14]]), "on")}${rule}
                ${t("Orientation", icons.orient)}${d("Orientation list")}
              </div>
              <div class="row">
                ${t("Align left", bars([[1, 1, 14], [1, 5, 9], [1, 9, 14], [1, 13, 9]]))}
                ${t("Center", bars([[1, 1, 14], [3, 5, 10], [1, 9, 14], [3, 13, 10]]))}
                ${t("Align right", bars([[1, 1, 14], [6, 5, 9], [1, 9, 14], [6, 13, 9]]), "on")}${rule}
                ${t("Decrease indent", icons.outdent)}${t("Increase indent", icons.indent)}
              </div>
            </div>
            <span class="tall"></span>
            <div class="rows labels">
              <div class="row"><button>${icons.wrap}Wrap Text</button></div>
              <div class="row"><button>${icons.merge}Merge &amp; Center</button><span class="push"></span>${d("Merge options")}</div>
            </div>
          </div>
          ${this.foot("Alignment", true)}
        </div>

        <div class="group number">
          <div class="rows">
            <div class="row">${this.pick("numfmt", "Number format", "Custom")}</div>
            <div class="row">${t("Currency", "$", "money")}${d("Currency list")}${t("Percent", "%", "money")}${t("Comma", icons.comma)}${rule}${t("Increase decimal", icons.incDec)}${t("Decrease decimal", icons.decDec)}</div>
          </div>
          ${this.foot("Number", true)}
        </div>

        <div class="group styles">
          <div class="body">
            ${this.big("w78", icons.condFormat, "Conditional", html`Formatting ${chev(7)}`)}
            ${this.big("w52", icons.fmtTable, "Format as", html`Table ${chev(7)}`)}
            <div class="gallery">
              <div class="swatches">
                <button class="normal">Normal</button><button class="bad">Bad</button>
                <button class="good">Good</button><button class="neutral">Neutral</button>
              </div>
              <button class="more" aria-label="More styles">${icon(9, 8, svg`<path d="M1 1.500h7M2 4l2.500 2.500L7 4" stroke="#222" stroke-width="1.2"/>`)}</button>
            </div>
          </div>
          ${this.foot("Styles")}
        </div>

        <div class="group cells">
          <div class="body">
            ${this.big("w41", icons.insert, "Insert", chev(7))}
            ${this.big("w41", icons.del, "Delete", chev(7))}
            ${this.big("w41", icons.format, "Format", chev(7))}
          </div>
          ${this.foot("Cells")}
        </div>

        <div class="group editing">
          <div class="body">
            <div class="stack push">
              <button>${icons.sum} AutoSum <span class="push">${chev(7)}</span></button>
              <button>${icons.fillDown}Fill ${chev(7)}</button>
              <button>${icons.eraser}Clear ${chev(7)}</button>
            </div>
            ${this.big("w44", icons.sort, "Sort &", html`Filter ${chev(7)}`)}
            ${this.big("w44", icons.find, "Find &", html`Select ${chev(7)}`)}
          </div>
          ${this.foot("Editing")}
        </div>

        <div class="group addins"><div class="body">${this.big("w59", icons.addins, "Add-ins")}</div>${this.foot("Add-ins")}</div>
        <div class="group analyze">
          <div class="body">${this.big("w44", icons.analyze, "Analyze", "Data")}${this.big("w44", icons.copilot, "Copilot")}</div>
          ${this.foot("")}
        </div>
        <div class="group acrobat"><div class="body">${this.big("w74", icons.pdf, "Create", "a PDF")}</div>${this.foot("Adobe Acrobat")}</div>
        <div class="group solver"><div class="body">${this.big("w54", icons.solver, "Solver")}</div>${this.foot("Solver")}</div>
        <div class="group rest">
          <span></span>
          <div class="foot"><button aria-label="Collapse ribbon">${chevWide()}</button></div>
        </div>
      </section>
    `;
  }
}

/* ---------- formula bar ---------- */

@customElement("formula-bar")
export class FormulaBar extends LitElement {
  static styles = [base, css`
    :host { display: flex; align-items: center; padding: 7px 8px 5px 7px; font-size: 12px; font-weight: 500; color: #000; }
    .box { display: flex; align-items: center; height: 22px; background: #fff; border: 1px solid #b4b4b4; border-radius: 4px; padding: 0 4px; }
    .name { width: 287px; }
    .box input { flex: 1; min-width: 0; }
    .dots { margin: 0 8px 0 7px; }
    .tools { width: 79px; justify-content: space-between; margin-right: 5px; }
    .fx { font: italic 700 17px/18px "Liberation Serif", serif; }
    .formula { flex: 1; padding: 0 2px 0 8px; }
  `];

  render() {
    return html`
      <div class="box name"><input aria-label="Name box" .value=${"D117"} /><button aria-label="Names">${chevWide()}</button></div>
      <span class="dots">${icons.vdots}</span>
      <div class="box tools">
        <button aria-label="Cancel">${icons.cancel}</button>
        <button aria-label="Enter">${icons.check}</button>
        <button class="fx" aria-label="Insert function">fx</button>
        <button aria-label="Functions">${chev(9, "#777")}</button>
      </div>
      <div class="box formula"><input aria-label="Formula" .value=${"40000"} /><button aria-label="Expand">${chevWide()}</button></div>
    `;
  }
}

/* ---------- sheet ---------- */

@customElement("sheet-grid")
export class SheetGrid extends LitElement {
  static styles = [base, css`
    :host { display: flex; min-height: 0; overflow: hidden; }
    .pane { flex: 1; min-width: 0; overflow: hidden; background: #fff; }
    table { width: 1940px; table-layout: fixed; border-collapse: separate; border-spacing: 0; font: 500 12px/14px Lato, "Liberation Sans", sans-serif; color: #000; }
    .cHead { width: 26px; }
    .cA { width: 61px; }
    .cB { width: 334px; }
    .cC { width: 80px; }
    .cN { width: 96px; }
    th, td { padding: 0; height: 16px; white-space: nowrap; overflow: visible; text-align: right; }
    tr.even > * { height: 17px; }
    tr.title > * { height: 20px; }
    thead th { height: 18px; background: #dadada; color: #222; font-weight: 400; text-align: center; border-bottom: 1px solid #9a9a9a; background-image: linear-gradient(#b4b4b4, #b4b4b4); background-repeat: no-repeat; background-size: 1px 9px; background-position: right bottom; padding-top: 2px; }
    thead th.corner { background-image: linear-gradient(135deg, transparent 50%, #b0b0b0 50%); background-size: 11px 11px; background-position: 11px 4px; border-right: 1px solid #b4b4b4; }
    tbody th { background: linear-gradient(#bcbcbc, #bcbcbc) right bottom / 12px 1px no-repeat #dadada; color: #222; font-weight: 400; padding-right: 5px; border-right: 2px solid #b0b0b0; }
    th.freeze, td.freeze { border-right: 1px solid #808080; }
    tr.frozen > * { border-bottom: 1px solid #8c8c8c; }
    .big { font-size: 14px; font-weight: 700; text-align: left; padding-left: 2px; }
    .mid { font-size: 14px; font-weight: 700; text-align: center; }
    .band { background: #b8b8b8; }
    .year { font-weight: 700; text-decoration: underline; padding-right: 3px; }
    .head { font-weight: 700; text-align: left; padding-left: 2px; }
    .start { font-weight: 700; padding-right: 1px; }
    .rate { background: #ffff99; color: #0000dc; text-decoration: underline; padding-right: 2px; }
    tr.item td { border-bottom: 1px dotted #000; }
    tr.rates.above td:not(.off) { border-bottom: 1px dotted #000; }
    .type { text-align: left; padding-left: 2px; border-right: 1px dotted #000; }
    .in { background: #ffff99; color: #0000dc; }
    .detail { text-align: left; padding-left: 11px; border-right: 1px dotted #000; }
    .month { text-align: center; }
    .value { padding-right: 6px; border-right: 1px dotted #000; }
    tr.item td.off { border: 0; }
    .scroll { width: 20px; display: flex; flex-direction: column; align-items: center; justify-content: space-between; padding: 5px 0 3px 2px; background: #dadada; }
    .track { flex: 1; padding-top: 4px; }
    .thumb { width: 9px; height: 178px; border-radius: 4px; background: #333; }
  `];

  private item(n: number, type: string, i: number, cost: Cost, allInput: boolean) {
    return html`<tr class="item ${n % 2 ? "even" : ""}">
      <th scope="row">${n}</th>
      <td class="type">${type}</td>
      <td class="in detail">Item ${i}</td>
      <td class="in month freeze">${cost.month}</td>
      ${cost.values.map((v, c) => html`<td class=${classMap({ value: true, in: c === 0 || allInput })}>${v}</td>`)}
      <td class="off" colspan="5"></td>
    </tr>`;
  }

  private rates(n: number, list: string[], lead: unknown, cls: string) {
    return html`<tr class="rates ${cls}"><th scope="row">${n}</th>${lead}${list.map((r) => html`<td class="rate">${r}</td>`)}<td class="off" colspan="5"></td></tr>`;
  }

  render() {
    const blank = html`<td></td><td></td><td class="freeze"></td><td></td>`;
    return html`
      <div class="pane">
        <table>
          <colgroup>
            <col class="cHead" /><col class="cA" /><col class="cB" /><col class="cC" />
            ${range(15).map(() => html`<col class="cN" />`)}
          </colgroup>
          <thead>
            <tr><th class="corner"></th>${COLUMNS.map((c) => html`<th scope="col" class=${classMap({ freeze: c === "C" })}>${c}</th>`)}</tr>
          </thead>
          <tbody>
            <tr class="even"><th scope="row">1</th><td colspan="3" class="freeze"></td><td colspan="15"></td></tr>
            <tr class="title"><th scope="row">2</th><td colspan="3" class="big freeze">OPEX Costs</td><td colspan="10" class="mid">Annualized Costs</td><td colspan="5"></td></tr>
            <tr class="even"><th scope="row">3</th><td colspan="3" class="band freeze"></td>${YEARS.map((y) => html`<td class="band year">${y}</td>`)}<td colspan="5"></td></tr>
            <tr><th scope="row">4</th><td colspan="3" class="freeze"></td><td colspan="15"></td></tr>
            ${this.rates(5, SM_GROWTH, html`<td class="head">Cost Type</td><td class="head">Cost Detail</td><td class="start freeze">Start Month #</td><td></td>`, "frozen even")}
            ${range(32).map((i) => this.item(i + 5, "S&M", i, SM[i] ?? EMPTY, i > 16))}
            <tr><th scope="row">38</th>${blank}<td colspan="14"></td></tr>
            ${this.rates(39, GA_GROWTH, blank, "above even")}
            ${range(7).map((i) => this.item(i + 39, "G&A", i, GA[i] ?? EMPTY, false))}
          </tbody>
        </table>
      </div>
      <div class="scroll">
        <button aria-label="Scroll up">${icons.triUp}</button>
        <div class="track"><div class="thumb"></div></div>
        <button aria-label="Scroll down">${icons.triDown}</button>
      </div>
    `;
  }
}

/* ---------- sheet tabs and status ---------- */

@customElement("sheet-footer")
export class SheetFooter extends LitElement {
  @property({ type: Number }) zoom = 90;

  static styles = [base, css`
    :host { display: block; color: #000; }
    .tabs { display: flex; align-items: center; height: 31px; border-bottom: 2px solid #fff; padding-left: 23px; font-size: 12px; font-weight: 500; }
    .nav { width: 30px; height: 28px; justify-content: flex-start; }
    .list { display: flex; flex: 1; min-width: 0; margin-left: 14px; overflow: hidden; align-items: flex-start; height: 29px; padding-top: 3px; }
    .tab { height: 23px; padding: 0 9px; border-radius: 4px; margin-left: 8px; position: relative; }
    .tab::before { content: ""; position: absolute; left: -5px; top: 3px; width: 1px; height: 17px; background: #b0b0b0; }
    .tab:first-child::before { display: none; }
    .white { background: #fff; }
    .yellow { background: #ffff99; }
    .purple { background: #32084f; color: #d9c2ea; border: 1px solid #5a2a80; padding: 0 11px; }
    .dark { background: #3f3f3f; color: #dcdcdc; padding: 0 10px; }
    .active { background: #fdfde4; font-weight: 700; color: #123d1c; height: 26px; margin-top: -3px; border-radius: 0 0 4px 4px; }
    .active span { border-bottom: 2px solid #10602a; line-height: 17px; }
    .tab:last-child { padding: 0 30px 0 8px; }
    .end { display: flex; align-items: center; flex: none; width: 260px; justify-content: space-between; padding: 0 22px 0 8px; }
    .hscroll { display: flex; align-items: center; gap: 5px; }
    .thumb { width: 119px; height: 9px; border-radius: 4px; background: #333; }
    .tools { display: flex; align-items: center; gap: 20px; }
    .status { display: flex; align-items: center; height: 19px; font-size: 10px; padding: 0 14px 0 10px; border-bottom: 1px solid #8a8a9a; }
    .status > .ic { margin-left: 19px; }
    .acc { font-weight: 600; gap: 3px; margin-left: 15px; flex: none; }
    .gap { flex: 1; }
    .view { width: 38px; height: 18px; }
    .view.on { background: #b8b8b8; }
    .zoom { display: flex; align-items: center; gap: 4px; margin-left: 3px; }
    input[type="range"] { width: 96px; height: 14px; background: linear-gradient(#555, #555) center / 100% 1px no-repeat; }
    input[type="range"]::-webkit-slider-thumb { appearance: none; width: 5px; height: 11px; background: #222; }
    .pct { margin-left: 6px; }
  `];

  render() {
    return html`
      <div class="tabs">
        <button class="nav" aria-label="Previous sheets">${icons.navL}</button>
        <button class="nav" aria-label="Next sheets">${icons.navR}</button>
        <div class="list">${TABS.map(([name, kind]) => html`<button class="tab ${kind}"><span>${name}</span></button>`)}</div>
        <div class="end">
          <div class="tools">
            <button aria-label="All sheets">${icons.hdots}</button>
            <button aria-label="New sheet">${icons.plus}</button>
            <button aria-label="Tab options">${icons.vdots}</button>
          </div>
          <div class="hscroll"><button aria-label="Scroll left">${icons.triL}</button><div class="thumb"></div><button aria-label="Scroll right">${icons.triR}</button></div>
        </div>
      </div>
      <div class="status">
        <span>Ready</span>${icons.macro}
        <button class="acc">${icons.access}Accessibility: Investigate</button>
        <span class="gap"></span>
        <button class="view on" aria-label="Normal view">${icons.viewNormal}</button>
        <button class="view" aria-label="Page layout view">${icons.viewPage}</button>
        <button class="view" aria-label="Page break view">${icons.viewBreak}</button>
        <div class="zoom">
          <button aria-label="Zoom out">${icon(8, 8, svg`<path d="M0 4h8" stroke="#222" stroke-width="1.3"/>`)}</button>
          <input type="range" min="10" max="170" .value=${String(this.zoom - 8)} aria-label="Zoom" />
          <button aria-label="Zoom in">${icon(8, 8, svg`<path d="M0 4h8M4 0v8" stroke="#222" stroke-width="1.3"/>`)}</button>
          <span class="pct">${this.zoom}%</span>
        </div>
      </div>
    `;
  }
}

/* ---------- taskbar ---------- */

@customElement("task-bar")
export class TaskBar extends LitElement {
  static styles = [base, css`
    :host { display: grid; grid-template-columns: 1fr auto 1fr; align-items: center; height: 45px; position: relative; background: #9ab6dc; font-size: 11px; line-height: 16px; color: #111; overflow: hidden; }
    .grain { position: absolute; inset: 0; width: 100%; height: 100%; }
    .weather, .apps, .tray { position: relative; display: flex; align-items: center; }
    .weather { padding-left: 20px; gap: 2px; text-align: left; align-items: center; justify-content: flex-start; font-weight: 500; }
    .badge { position: relative; display: block; }
    .count { position: absolute; left: 14px; top: 0; color: #f3c4bd; font-size: 10px; }
    .dim { color: #3c4a55; }
    .apps { gap: 4px; align-items: flex-start; height: 45px; padding: 8px 0 0 5px; }
    .pill { display: flex; align-items: center; width: 205px; height: 29px; border-radius: 15px; background: #dcfdfd; padding: 0 6px 0 10px; gap: 9px; border-bottom: 1px solid #8aa6b8; margin-left: 3px; }
    .pill input { flex: 1; min-width: 0; font-size: 12px; }
    .pill input::placeholder { color: #333; opacity: 1; }
    .app { width: 33px; height: 34px; flex-direction: column; justify-content: space-between; }
    .app .hold { height: 29px; display: flex; align-items: center; }
    .app.run::after { content: ""; width: 6px; height: 4px; border-radius: 2px; background: #4a4a4a; }
    .icons { display: flex; }
    .icons .app { width: 41px; }
    .tray { justify-content: flex-end; gap: 14px; padding-right: 18px; text-align: right; font-weight: 500; }
    .snd { margin-left: -6px; }
  `];

  render() {
    const apps: [string, unknown, boolean][] = [
      ["Task view", icons.taskview, false], ["File Explorer", icons.folder, true], ["Opera", icons.opera, true],
      ["Snipping Tool", icons.snip, false], ["Excel", icons.excelBig, true], ["Chrome", icons.chrome, true],
    ];
    return html`
      <svg class="grain" aria-hidden="true">
        <filter id="dense" x="0" y="0" width="100%" height="100%" color-interpolation-filters="sRGB">
          <feTurbulence type="fractalNoise" baseFrequency="0.6" numOctaves="2" seed="4" />
          <feColorMatrix values="0 0 0 0 0.6  0 0 0 0 0.86  0 0 0 0 0.85  30 0 0 0 -14.4" />
        </filter>
        <filter id="sparse" x="0" y="0" width="100%" height="100%" color-interpolation-filters="sRGB">
          <feTurbulence type="fractalNoise" baseFrequency="0.6" numOctaves="2" seed="9" />
          <feColorMatrix values="0 0 0 0 0.6  0 0 0 0 0.86  0 0 0 0 0.85  30 0 0 0 -20.4" />
        </filter>
        <rect width="28.5%" height="100%" filter="url(#dense)" />
        <rect x="28.5%" width="68.5%" height="100%" filter="url(#sparse)" />
        <rect x="97%" width="3%" height="100%" filter="url(#dense)" />
      </svg>
      <button class="weather">
        <span class="badge">${icons.weather}<span class="count">3</span></span>
        <span>66°F<br /><span class="dim">Sunny</span></span>
      </button>
      <div class="apps">
        <button class="app" aria-label="Start"><span class="hold">${icons.start}</span></button>
        <label class="pill">${icons.glass}<input type="text" placeholder="Search" aria-label="Search Windows" />${icons.balloons}</label>
        <div class="icons">${apps.map(([n, pic, run]) => html`<button class="app ${run ? "run" : ""}" aria-label=${n}><span class="hold">${pic}</span></button>`)}</div>
      </div>
      <div class="tray">
        <button aria-label="Hidden icons">${icons.trayUp}</button>
        <button aria-label="Network">${icons.tray}</button>
        <button class="snd" aria-label="Volume">${icons.speaker}</button>
        <time>8:04 AM<br />8/18/2025</time>
      </div>
    `;
  }
}

@customElement("app-root")
export class AppRoot extends LitElement {
  static styles = css`
    :host { display: flex; flex-direction: column; height: 100vh; background: #dadada; font-family: "Open Sans", "Noto Sans", sans-serif; overflow: hidden; }
    .sheet { flex: 1; }
  `;

  render() {
    return html`
      <title-bar></title-bar>
      <ribbon-bar></ribbon-bar>
      <formula-bar></formula-bar>
      <sheet-grid class="sheet"></sheet-grid>
      <sheet-footer></sheet-footer>
      <task-bar></task-bar>
    `;
  }
}
